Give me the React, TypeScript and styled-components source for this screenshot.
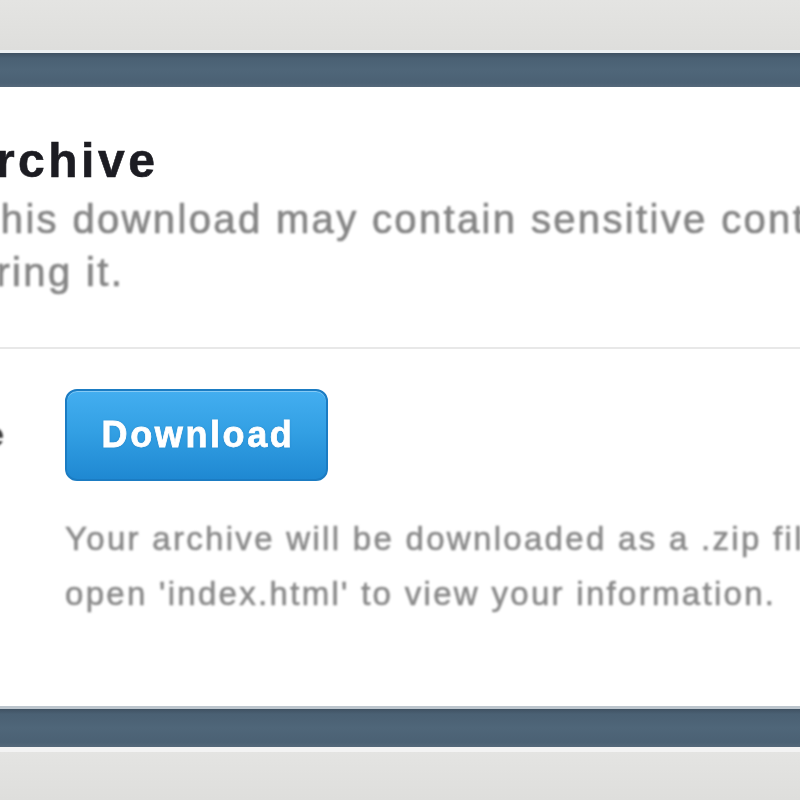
import React from "react";
import styled, { createGlobalStyle } from "styled-components";

const Global = createGlobalStyle`
  html, body {
    margin: 0;
    padding: 0;
    background: #e1e1df;
  }
  body {
    overflow: hidden;
  }
`;

const Page = styled.div`
  width: 800px;
  height: 800px;
  overflow: hidden;
  display: flex;
  flex-direction: column;
  background: #e0e0de;
  font-family: "Liberation Sans", Arial, Helvetica, sans-serif;
`;

const Backdrop = styled.div<{ $h: number }>`
  flex: none;
  height: ${(p) => p.$h}px;
  background: linear-gradient(#e4e4e2, #dededc);
`;

const Band = styled.div<{ $h: number; $top: string; $bottom: string }>`
  flex: none;
  height: ${(p) => p.$h}px;
  border-top: 3px solid ${(p) => p.$top};
  border-bottom: ${(p) => (p.$bottom === "none" ? "0" : `5px solid ${p.$bottom}`)};
  background: linear-gradient(
    #3f5162 0,
    #4a6073 5px,
    #4f6679 50%,
    #4b6174 88%,
    #55687a 100%
  );
`;

const Panel = styled.section`
  flex: 1;
  background: #ffffff;
  overflow: hidden;
`;

const Header = styled.header`
  padding-top: 46px;
`;

const Title = styled.h1`
  margin: 0 0 0 -366px;
  font-size: 48px;
  line-height: 56px;
  font-weight: 700;
  letter-spacing: 3.5px;
  color: #1c1c22;
  -webkit-text-stroke: 0.6px #1c1c22;
  white-space: nowrap;
  filter: blur(0.7px);
`;

const Lead = styled.p`
  margin: 4px 0 0 -64px;
  text-indent: 38px;
  font-size: 40px;
  line-height: 53px;
  letter-spacing: 2.35px;
  color: #858585;
  -webkit-text-stroke: 0.7px #858585;
  white-space: nowrap;
  filter: blur(0.8px);
`;

const Divider = styled.hr`
  margin: 48px 0 0;
  border: 0;
  height: 2px;
  background: #e8e8e8;
`;

const Row = styled.div`
  display: grid;
  grid-template-columns: 200px 1fr;
  column-gap: 61px;
  margin-left: -196px;
  padding-top: 40px;
`;

const Label = styled.div`
  height: 92px;
  display: flex;
  align-items: center;
  justify-content: flex-end;
  font-size: 33px;
  font-weight: 700;
  color: #333333;
  white-space: nowrap;
  filter: blur(0.8px);
`;

const Body = styled.div`
  display: flex;
  flex-direction: column;
  align-items: flex-start;
`;

const DownloadButton = styled.button`
  width: 263px;
  height: 92px;
  box-sizing: border-box;
  border-radius: 12px;
  border: 2px solid #1b7cc3;
  background: linear-gradient(#43aef0 0%, #33a0e4 45%, #1f88d2 100%);
  box-shadow: inset 0 1px 0 rgba(255, 255, 255, 0.35);
  color: #ffffff;
  font-family: "Liberation Sans", Arial, Helvetica, sans-serif;
  font-size: 36px;
  font-weight: 700;
  letter-spacing: 2.6px;
  padding: 0 0 0 3px;
  -webkit-text-stroke: 0.8px #ffffff;
  text-shadow: 0 0 2px rgba(10, 80, 150, 0.55);
  cursor: pointer;
  filter: blur(0.7px);
`;

const Hint = styled.div`
  margin-top: 30px;
  font-size: 33px;
  line-height: 55px;
  letter-spacing: 2.3px;
  color: #8a8a8a;
  -webkit-text-stroke: 0.6px #8a8a8a;
  white-space: nowrap;
  filter: blur(0.8px);
`;

const HintLine = styled.span`
  display: block;
`;

export default function App() {
  return (
    <>
      <Global />
      <Page>
        <Backdrop $h={50} />
        <Band $h={34} $top="#edf0f2" $bottom="none" />
        <Panel>
          <Header>
            <Title>Your Twitter archive</Title>
            <Lead>
              This download may contain sensitive content. Please be careful when
              <br />
              storing it.
            </Lead>
          </Header>
          <Divider />
          <Row>
            <Label>Your archive</Label>
            <Body>
              <DownloadButton type="button">Download</DownloadButton>
              <Hint>
                <HintLine>Your archive will be downloaded as a .zip file. Unzip it and</HintLine>
                <HintLine>open 'index.html' to view your information.</HintLine>
              </Hint>
            </Body>
          </Row>
        </Panel>
        <Band $h={38} $top="#bcc5cd" $bottom="#f3f3f3" />
        <Backdrop $h={48} />
      </Page>
    </>
  );
}
